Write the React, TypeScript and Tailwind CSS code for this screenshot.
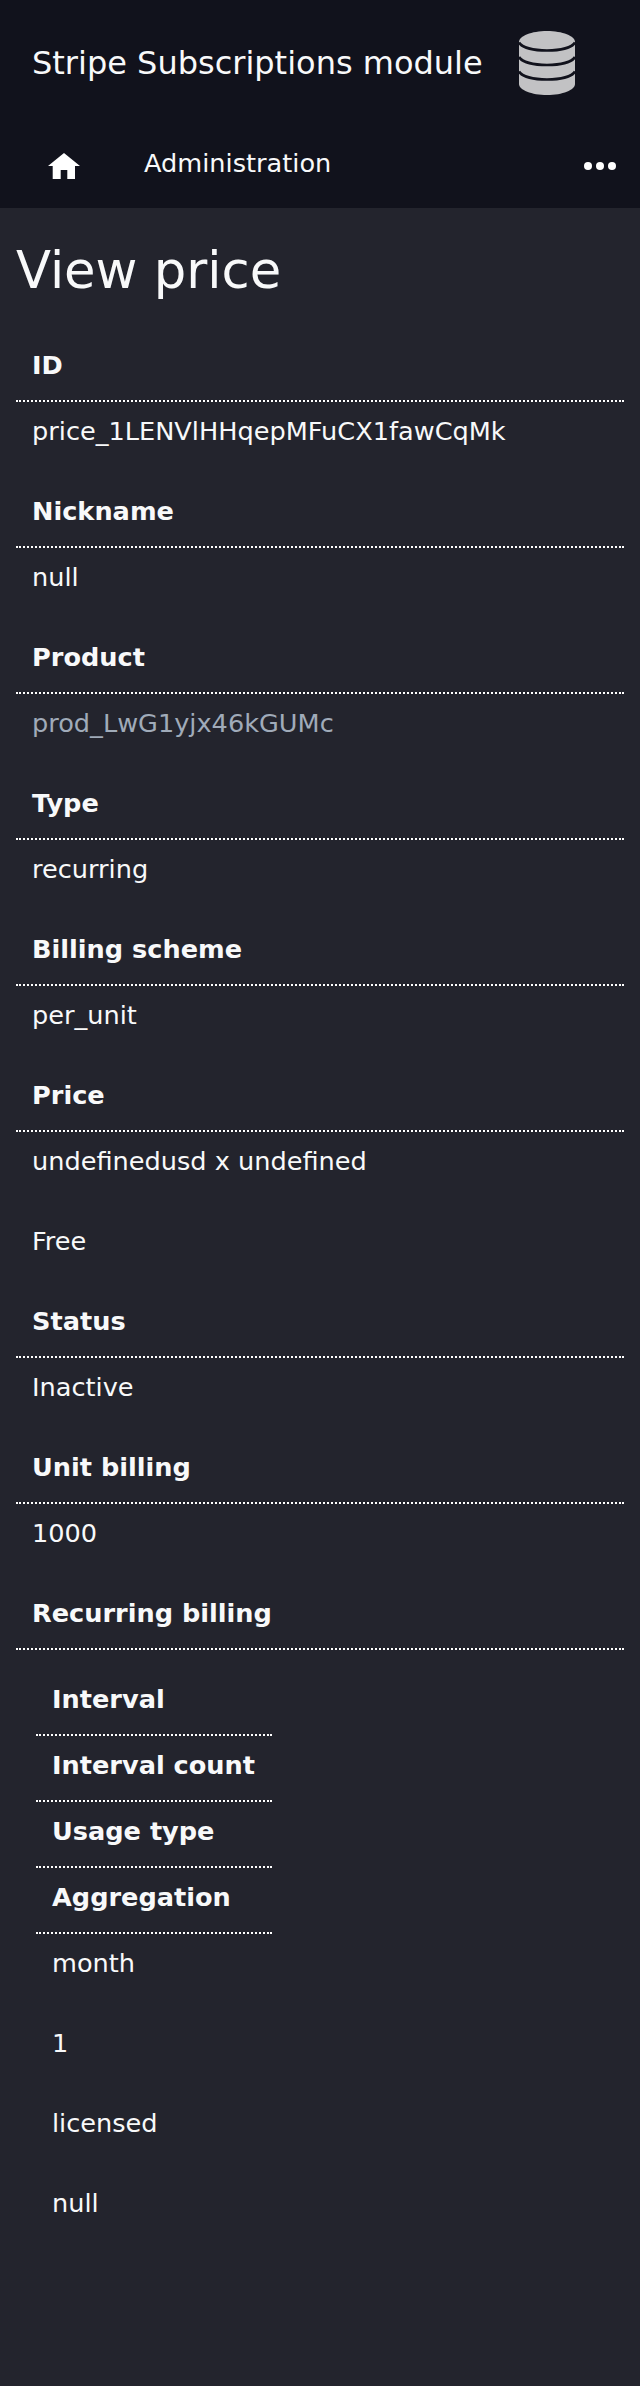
const rows = [
  { label: "ID", value: "price_1LENVlHHqepMFuCX1fawCqMk" },
  { label: "Nickname", value: "null" },
  { label: "Product", value: "prod_LwG1yjx46kGUMc", link: true },
  { label: "Type", value: "recurring" },
  { label: "Billing scheme", value: "per_unit" },
];

const rowsAfterPrice = [
  { label: "Status", value: "Inactive" },
  { label: "Unit billing", value: "1000" },
];

const recurringLabels = ["Interval", "Interval count", "Usage type", "Aggregation"];
const recurringValues = ["month", "1", "licensed", "null"];

function Label({ children }: { children: React.ReactNode }) {
  return (
    <div className="border-b-2 border-dotted border-white px-4 pt-[10px] h-[66px] text-[25.6px] leading-[38.4px] font-bold text-[#f8f9fa] box-border">
      {children}
    </div>
  );
}

function Value({ children, link }: { children: React.ReactNode; link?: boolean }) {
  return (
    <div className={`px-4 pt-[10px] h-[80px] text-[25.6px] leading-[38.4px] ${link ? "text-[#a0abb9]" : "text-[#f8f9fa]"}`}>
      {children}
    </div>
  );
}

function DatabaseIcon() {
  return (
    <svg viewBox="0 0 56 64" className="ml-[36px] w-[56px] h-[64px]">
      <path
        d="M0 11C0 5 12.5 0 28 0C43.5 0 56 5 56 11V53C56 59 43.5 64 28 64C12.5 64 0 59 0 53Z"
        fill="#c2c2c4"
      />
      <g fill="none" stroke="#11121c" strokeWidth="2.6">
        <path d="M0 11.5C3 16.5 14 19.5 28 19.5S53 16.5 56 11.5" />
        <path d="M0 26C3 31 14 34 28 34S53 31 56 26" />
        <path d="M0 40.5C3 45.5 14 48.5 28 48.5S53 45.5 56 40.5" />
      </g>
    </svg>
  );
}

function HomeIcon() {
  return (
    <svg viewBox="0 0 32 26" className="w-[32px] h-[26px] -mt-[2px] fill-white">
      <path d="M16 0L32 13H27V26H19.3V17H12.7V26H4.7V13H0Z" />
    </svg>
  );
}

function DotsIcon() {
  return (
    <svg viewBox="0 0 32 8" className="ml-auto w-[32px] h-[8px] -mt-[2px] fill-white">
      <circle cx="4" cy="4" r="4" />
      <circle cx="16" cy="4" r="4" />
      <circle cx="28" cy="4" r="4" />
    </svg>
  );
}

export default function App() {
  return (
    <div className="min-h-[2386px] bg-[#23242d] font-['DejaVu_Sans',sans-serif] text-[#f8f9fa]">
      <header className="bg-[#11121c] h-[208px]">
        <div className="flex items-center h-[126px] pl-8">
          <span className="text-[32px] leading-[48px] text-[#f8f9fa]">Stripe Subscriptions module</span>
          <DatabaseIcon />
        </div>
        <nav className="flex items-center h-[82px] pl-[48px] pr-[24px]">
          <HomeIcon />
          <span className="ml-[64px] text-[25.6px] leading-[38.4px] -mt-2">Administration</span>
          <DotsIcon />
        </nav>
      </header>

      <main className="px-4 pt-8">
        <h1 className="text-[51.2px] leading-[61px] mb-[35px] text-[#f8f9fa]">View price</h1>

        {rows.map((r) => (
          <div key={r.label}>
            <Label>{r.label}</Label>
            <Value link={r.link}>{r.value}</Value>
          </div>
        ))}

        <Label>Price</Label>
        <div className="px-4 pt-[10px] text-[25.6px] leading-[38.4px] h-[160px]">
          <div className="h-[80px]">undefinedusd x undefined</div>
          <div>Free</div>
        </div>

        {rowsAfterPrice.map((r) => (
          <div key={r.label}>
            <Label>{r.label}</Label>
            <Value>{r.value}</Value>
          </div>
        ))}

        <Label>Recurring billing</Label>
        <div className="px-5 pt-[20px]">
          <div className="w-[236px]">
            {recurringLabels.map((l) => (
              <div
                key={l}
                className="border-b-2 border-dotted border-white h-[66px] px-4 pt-[10px] text-[25.6px] leading-[38.4px] font-bold box-border"
              >
                {l}
              </div>
            ))}
          </div>
          <div className="pt-[10px]">
            {recurringValues.map((v) => (
              <div key={v} className="h-[80px] px-4 text-[25.6px] leading-[38.4px]">
                {v}
              </div>
            ))}
          </div>
        </div>
      </main>
    </div>
  );
}
